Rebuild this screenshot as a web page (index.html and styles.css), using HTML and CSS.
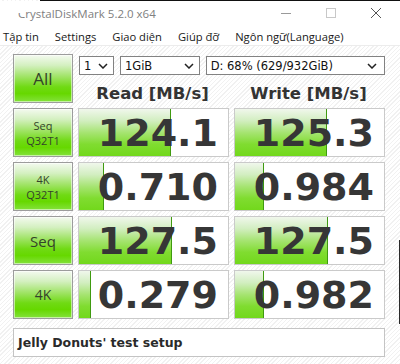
FILE: index.html
```html
<!DOCTYPE html>
<html>
<head>
<meta charset="utf-8">
<link rel="stylesheet" href="styles.css">
</head>
<body>
<div class="window">
  <div class="topline"></div>
  <div class="titlebar">
    <span class="title">CrystalDiskMark 5.2.0 x64</span>
    <div class="cover"></div>
    <div class="controls">
      <svg class="ctl" width="12" height="12" viewBox="0 0 12 12"><line x1="1" y1="6.5" x2="11" y2="6.5" stroke="#9a9a9a" stroke-width="1"/></svg>
      <svg class="ctl" width="12" height="12" viewBox="0 0 12 12"><rect x="1.5" y="1.5" width="9" height="9" fill="none" stroke="#c8c8c8" stroke-width="1"/></svg>
      <svg class="ctl" width="12" height="12" viewBox="0 0 12 12"><path d="M1 1 L11 11 M11 1 L1 11" stroke="#555" stroke-width="1" fill="none"/></svg>
    </div>
  </div>
  <div class="menubar">
    <span>Tập tin</span>
    <span>Settings</span>
    <span>Giao diện</span>
    <span>Giúp đỡ</span>
    <span>Ngôn ngữ(Language)</span>
  </div>
  <div class="main">
    <div class="grid">
      <div class="btn btn-all">All</div>
      <div class="head">
        <div class="selects">
          <div class="sel sel-count"><span>1</span><svg width="10" height="6" viewBox="0 0 10 6"><path d="M1 1 L5 5 L9 1" fill="none" stroke="#222" stroke-width="1.5"/></svg></div>
          <div class="sel sel-size"><span>1GiB</span><svg width="10" height="6" viewBox="0 0 10 6"><path d="M1 1 L5 5 L9 1" fill="none" stroke="#222" stroke-width="1.5"/></svg></div>
          <div class="sel sel-drive"><span>D: 68% (629/932GiB)</span><svg width="10" height="6" viewBox="0 0 10 6"><path d="M1 1 L5 5 L9 1" fill="none" stroke="#222" stroke-width="1.5"/></svg></div>
        </div>
        <div class="headings">
          <div class="h">Read [MB/s]</div>
          <div class="h">Write [MB/s]</div>
        </div>
      </div>

      <div class="btn btn-small">Seq<br>Q32T1</div>
      <div class="cell"><div class="bar" style="width:92px"></div><span class="num">124.1</span></div>
      <div class="cell"><div class="bar" style="width:92px"></div><span class="num">125.3</span></div>

      <div class="btn btn-small">4K<br>Q32T1</div>
      <div class="cell"><div class="bar" style="width:25px"></div><span class="num">0.710</span></div>
      <div class="cell"><div class="bar" style="width:29px"></div><span class="num">0.984</span></div>

      <div class="btn btn-seq">Seq</div>
      <div class="cell"><div class="bar" style="width:93px"></div><span class="num">127.5</span></div>
      <div class="cell"><div class="bar" style="width:93px"></div><span class="num">127.5</span></div>

      <div class="btn btn-4k">4K</div>
      <div class="cell"><div class="bar" style="width:12px"></div><span class="num">0.279</span></div>
      <div class="cell"><div class="bar" style="width:29px"></div><span class="num">0.982</span></div>
    </div>
    <div class="comment">Jelly Donuts' test setup</div>
  </div>
  <div class="edge"></div>
</div>
</body>
</html>
```

FILE: styles.css
```css
* { box-sizing: border-box; }
html, body { margin: 0; padding: 0; }
body {
  width: 400px;
  height: 364px;
  overflow: hidden;
  background: #fff;
  font-family: "Open Sans", "Noto Sans", sans-serif;
}
.window {
  position: relative;
  width: 400px;
  height: 364px;
  display: flex;
  flex-direction: column;
  background: repeating-linear-gradient(135deg, #ffffff 0px, #ffffff 2px, #f1f1f1 2px, #f1f1f1 3px);
}
.topline {
  height: 1px;
  margin-left: 40px;
  background: #111;
}
.titlebar {
  position: relative;
  height: 26px;
  background: #fff;
  display: flex;
  align-items: center;
  padding-left: 18px;
}
.title {
  font-size: 11.5px;
  color: #808080;
  margin-top: -2px;
}
.cover {
  position: absolute;
  left: 0;
  top: 0;
  width: 25px;
  height: 12px;
  background: #fff;
}
.controls {
  margin-left: auto;
  display: flex;
  gap: 33px;
  padding-right: 18px;
  margin-top: -3px;
}
.menubar {
  height: 19px;
  background: #fff;
  display: flex;
  align-items: center;
  gap: 16px;
  padding-left: 3px;
  font-size: 11.2px;
  color: #1a1a1a;
  border-bottom: 1px solid #ececec;
}
.main {
  padding: 8px 0 0 13px;
}
.grid {
  display: grid;
  grid-template-columns: 60px 151px 151px;
  grid-auto-rows: 49px;
  column-gap: 5px;
  row-gap: 5px;
}
.btn {
  border: 1px solid #9c9c9c;
  background: linear-gradient(to bottom, #f4faf0 0%, #d4f0c0 22%, #a2e46a 45%, #70da14 68%, #66d800 82%, #84e23c 100%);
  box-shadow: inset 0 0 0 1px rgba(255,255,255,0.55);
  color: #34432a;
  font-family: "Open Sans", "Noto Sans", sans-serif;
  display: flex;
  align-items: center;
  justify-content: center;
  text-align: center;
}
.btn-all { font-size: 17px; }
.btn-small { font-size: 11px; line-height: 15px; }
.btn-seq { font-size: 15px; }
.btn-4k { font-size: 14px; }
.head {
  grid-column: 2 / 4;
  display: flex;
  flex-direction: column;
}
.selects {
  display: flex;
  margin-top: 2px;
  padding-left: 1px;
  height: 21px;
}
.sel {
  border: 1px solid #828282;
  background: #fff;
  display: flex;
  align-items: center;
  justify-content: space-between;
  padding: 0 5px 0 4px;
  font-family: "DejaVu Sans", sans-serif;
  font-size: 11.5px;
  color: #111;
}
.sel-count { width: 35px; }
.sel-size { width: 80px; margin-left: 6px; }
.sel-drive { width: 180px; margin-left: 6px; padding-right: 7px; }
.headings {
  display: grid;
  grid-template-columns: 151px 151px;
  column-gap: 5px;
  margin-left: -1px;
  padding-top: 9px;
}
.h {
  text-align: center;
  font-family: "DejaVu Sans", sans-serif;
  font-weight: bold;
  font-size: 16.5px;
  line-height: 19px;
  color: #333;
}
.cell {
  position: relative;
  border: 1px solid #cacaca;
  background: #fff;
  display: flex;
  align-items: center;
  justify-content: flex-end;
  padding-right: 10px;
}
.bar {
  position: absolute;
  left: 0;
  top: 0;
  bottom: 0;
  background: linear-gradient(to bottom, #f0f7ec 0%, #d2eec0 25%, #a6e472 50%, #80dc30 75%, #72d81c 100%);
  border-right: 1px solid #3f9a10;
}
.num {
  position: relative;
  font-family: "DejaVu Sans", sans-serif;
  font-weight: bold;
  font-size: 38px;
  line-height: 47px;
  color: #363636;
  margin-top: 1px;
}
.comment {
  margin-top: 9px;
  width: 372px;
  height: 29px;
  border: 1px solid #c4c4c4;
  background: #fff;
  display: flex;
  align-items: center;
  padding-left: 4px;
  font-family: "DejaVu Sans", sans-serif;
  font-weight: bold;
  font-size: 12.5px;
  color: #2a2a2a;
}
.edge {
  position: absolute;
  right: 0;
  top: 240px;
  width: 1px;
  height: 84px;
  background: #2a2a2a;
}
```
